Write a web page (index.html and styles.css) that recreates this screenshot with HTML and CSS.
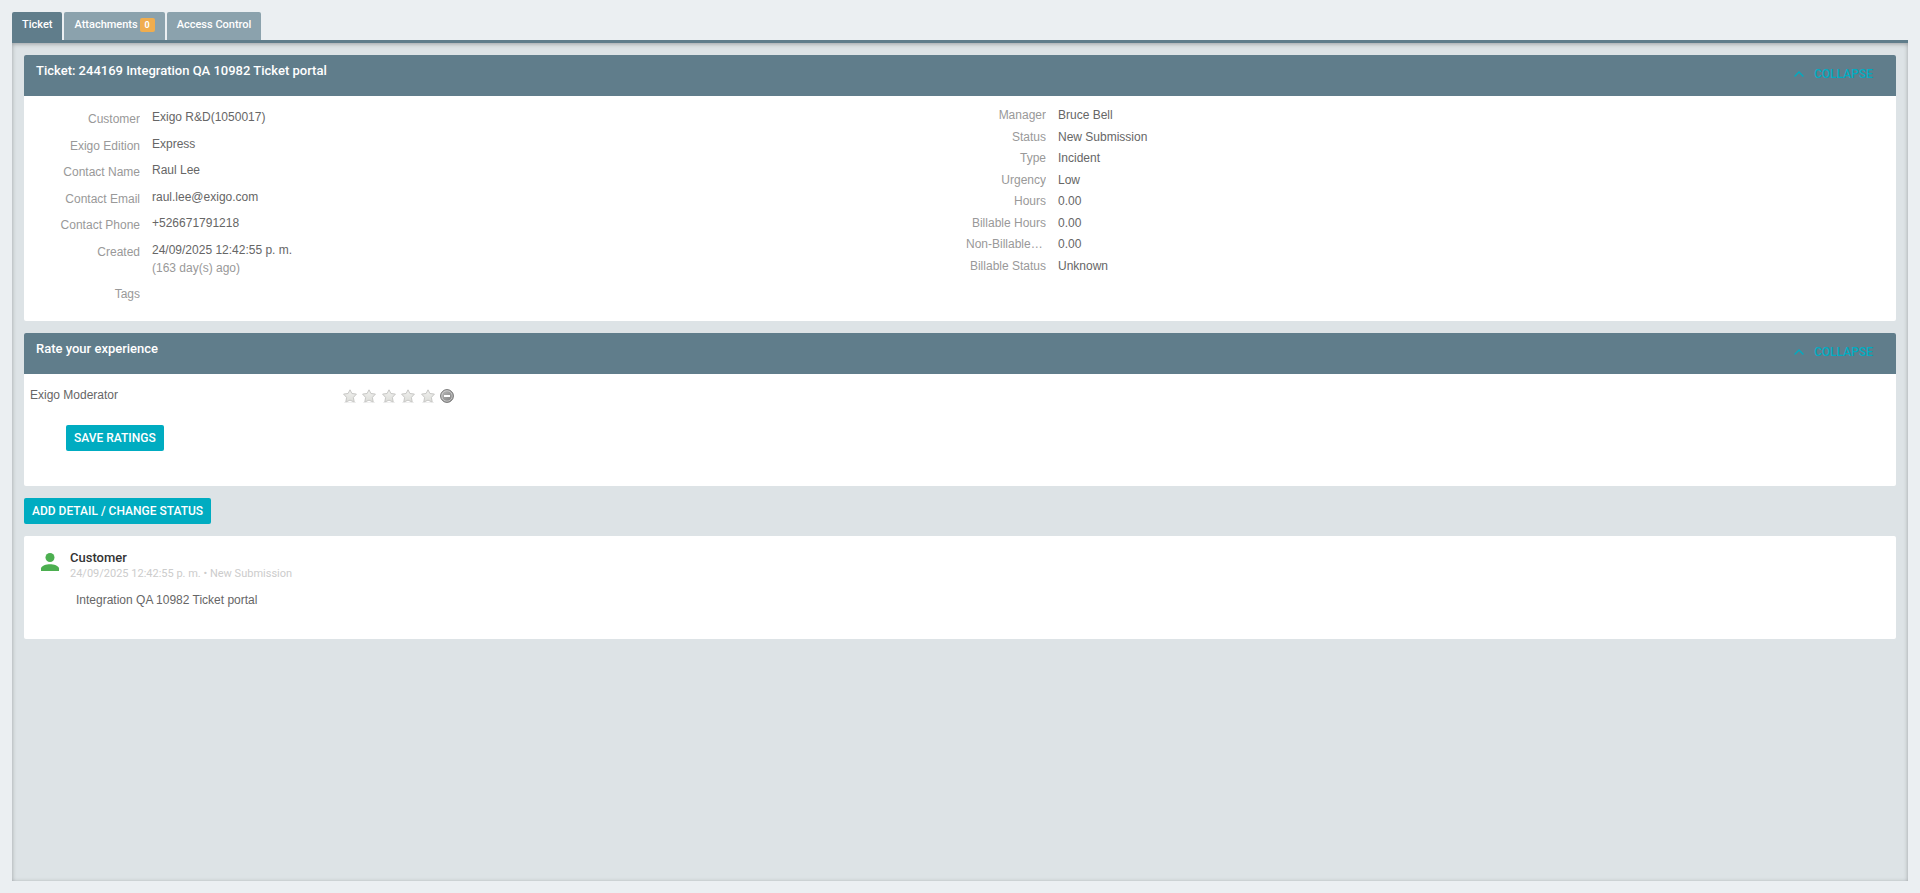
FILE: index.html
```html
<!DOCTYPE html>
<html lang="en">
<head>
    <meta charset="UTF-8">
    <meta name="viewport" content="width=device-width, initial-scale=1.0">
    <title>Ticket 244169</title>
    <link rel="stylesheet" href="styles.css">
</head>
<body>
    <svg class="sprite" aria-hidden="true">
        <defs>
            <linearGradient id="starFill" x1="0" y1="0" x2="0" y2="1">
                <stop offset="0" stop-color="#f2f2f0"/>
                <stop offset="1" stop-color="#dcddd9"/>
            </linearGradient>
            <linearGradient id="cancelFill" x1="0" y1="0" x2="1" y2="1">
                <stop offset="0" stop-color="#bcbcbc"/>
                <stop offset="1" stop-color="#7c7c7c"/>
            </linearGradient>
            <symbol id="star" viewBox="0 0 14 14">
                <path d="M7 .8 8.9 4.5 13.4 5.1 10.4 8.4 11.2 13.1 7 11.1 2.8 13.1 3.6 8.4 .6 5.1 5.1 4.5Z" fill="url(#starFill)" stroke="#c6c6c4" stroke-width="1" stroke-linejoin="round"/>
                <path d="M1 13.6H13" stroke="#e3e3e3" stroke-width=".6"/>
            </symbol>
            <symbol id="chevron" viewBox="0 0 10 6">
                <path d="M.6 5.4 5 1 9.4 5.4" fill="none" stroke="currentColor" stroke-width="1.4"/>
            </symbol>
        </defs>
    </svg>

    <nav class="tabs">
        <a class="tab active" href="#ticket">Ticket</a>
        <a class="tab" href="#attachments">Attachments <span class="badge">0</span></a>
        <a class="tab" href="#access">Access Control</a>
    </nav>

    <main class="tab-content" id="ticket">
        <section class="panel">
            <header class="panel-header">
                <h2>Ticket: 244169 Integration QA 10982 Ticket portal</h2>
                <button class="collapse-btn" type="button">
                    <svg class="chevron"><use href="#chevron"/></svg>
                    COLLAPSE
                </button>
            </header>
            <div class="ticket-body">
                <dl class="details contact">
                    <div class="row"><dt>Customer</dt><dd>Exigo R&amp;D(1050017)</dd></div>
                    <div class="row"><dt>Exigo Edition</dt><dd>Express</dd></div>
                    <div class="row"><dt>Contact Name</dt><dd>Raul Lee</dd></div>
                    <div class="row"><dt>Contact Email</dt><dd>raul.lee@exigo.com</dd></div>
                    <div class="row"><dt>Contact Phone</dt><dd>+526671791218</dd></div>
                    <div class="row"><dt>Created</dt><dd>24/09/2025 12:42:55 p. m.<br><span class="muted">(163 day(s) ago)</span></dd></div>
                    <div class="row"><dt>Tags</dt><dd></dd></div>
                </dl>
                <dl class="details status">
                    <div class="row"><dt>Manager</dt><dd>Bruce Bell</dd></div>
                    <div class="row"><dt>Status</dt><dd>New Submission</dd></div>
                    <div class="row"><dt>Type</dt><dd>Incident</dd></div>
                    <div class="row"><dt>Urgency</dt><dd>Low</dd></div>
                    <div class="row"><dt>Hours</dt><dd>0.00</dd></div>
                    <div class="row"><dt>Billable Hours</dt><dd>0.00</dd></div>
                    <div class="row"><dt>Non-Billable Hours</dt><dd>0.00</dd></div>
                    <div class="row"><dt>Billable Status</dt><dd>Unknown</dd></div>
                </dl>
            </div>
        </section>

        <section class="panel">
            <header class="panel-header">
                <h2>Rate your experience</h2>
                <button class="collapse-btn" type="button">
                    <svg class="chevron"><use href="#chevron"/></svg>
                    COLLAPSE
                </button>
            </header>
            <form class="rating-body">
                <div class="rating-row">
                    <span class="rating-name">Exigo Moderator</span>
                    <div class="stars">
                        <label class="star"><input type="radio" name="rating" value="1" aria-label="1 star"><svg><use href="#star"/></svg></label>
                        <label class="star"><input type="radio" name="rating" value="2" aria-label="2 stars"><svg><use href="#star"/></svg></label>
                        <label class="star"><input type="radio" name="rating" value="3" aria-label="3 stars"><svg><use href="#star"/></svg></label>
                        <label class="star"><input type="radio" name="rating" value="4" aria-label="4 stars"><svg><use href="#star"/></svg></label>
                        <label class="star"><input type="radio" name="rating" value="5" aria-label="5 stars"><svg><use href="#star"/></svg></label>
                        <button class="clear-rating" type="reset" aria-label="Clear rating">
                            <svg viewBox="0 0 14 14">
                                <circle cx="7" cy="7" r="6.4" fill="url(#cancelFill)" stroke="#777" stroke-width="1"/>
                                <circle cx="7" cy="7" r="5.2" fill="none" stroke="#d2d2d2" stroke-width=".8"/>
                                <rect x="4" y="6" width="6" height="2" fill="#fff"/>
                            </svg>
                        </button>
                    </div>
                </div>
                <button class="btn" type="submit">SAVE RATINGS</button>
            </form>
        </section>

        <button class="btn" type="button">ADD DETAIL / CHANGE STATUS</button>

        <article class="panel entry">
            <svg class="avatar" viewBox="0 0 18 18">
                <circle cx="9" cy="4.5" r="4.5" fill="#4caf50"/>
                <path d="M0 18V15.5C0 12.8 5.5 11.3 9 11.3S18 12.8 18 15.5V18Z" fill="#4caf50"/>
            </svg>
            <div class="entry-content">
                <h3>Customer</h3>
                <p class="entry-meta">24/09/2025 12:42:55 p. m. • New Submission</p>
                <p class="entry-text">Integration QA 10982 Ticket portal</p>
            </div>
        </article>
    </main>
</body>
</html>
```
FILE: styles.css
```css
* {
    margin: 0;
    padding: 0;
    box-sizing: border-box;
}

body {
    display: flex;
    flex-direction: column;
    min-height: 100vh;
    padding: 12px;
    background: #ebeff2;
    color: #666;
    font-family: "Liberation Sans", Arial, sans-serif;
    font-size: 12px;
    line-height: 18px;
}

.sprite {
    position: absolute;
    width: 0;
    height: 0;
}

/* Tabs */
.tabs {
    display: flex;
    gap: 2px;
    border-bottom: 3px solid #607d8b;
}

.tab {
    display: flex;
    align-items: center;
    gap: 2px;
    height: 28px;
    padding: 0 10px 2px;
    background: #8ba2ad;
    border-radius: 2px 2px 0 0;
    color: #fff;
    font-family: Roboto, sans-serif;
    font-size: 11px;
    font-weight: 500;
    text-decoration: none;
}

.tab.active {
    background: #607d8b;
}

.badge {
    width: 15px;
    height: 14px;
    background: #f0ad4e;
    border-radius: 2px;
    font-size: 9px;
    font-weight: 700;
    line-height: 14px;
    text-align: center;
}

.tab-content {
    flex: 1;
    display: flex;
    flex-direction: column;
    align-items: flex-start;
    gap: 12px;
    padding: 12px;
    background: #dde3e6;
    box-shadow: inset 0 1px 4px rgba(0, 0, 0, 0.3);
}

/* Panels */
.panel {
    width: 100%;
    background: #fff;
    border-radius: 2px;
    overflow: hidden;
}

.panel-header {
    display: flex;
    justify-content: space-between;
    height: 41px;
    padding: 7px 23px 0 12px;
    background: #607d8b;
    color: #fff;
}

.panel-header h2 {
    font-family: Roboto, sans-serif;
    font-size: 13px;
    font-weight: 500;
    line-height: 18px;
}

.collapse-btn {
    display: flex;
    align-items: center;
    gap: 10px;
    height: 24px;
    background: none;
    border: none;
    color: #00acc1;
    font-family: Roboto, sans-serif;
    font-size: 12px;
    font-weight: 500;
    cursor: pointer;
}

.chevron {
    width: 10px;
    height: 6px;
}

/* Ticket details */
.ticket-body {
    display: grid;
    grid-template-columns: 1fr 1fr;
    padding: 10px 0 18px;
}

.details {
    display: flex;
    flex-direction: column;
    justify-content: space-between;
}

.row {
    display: flex;
    gap: 12px;
}

.row dt {
    width: 80px;
    color: #999;
    text-align: right;
    white-space: nowrap;
    overflow: hidden;
    text-overflow: ellipsis;
}

.contact {
    min-height: 197px;
    padding-left: 36px;
}

.contact dt {
    padding-top: 4px;
}

.contact dd {
    padding-top: 2px;
}

.status {
    padding: 0 0 28px 6px;
}

.muted {
    color: #999;
}

/* Rating */
.rating-body {
    padding: 12px 6px 35px;
}

.rating-row {
    display: flex;
    margin-bottom: 19px;
}

.rating-name {
    width: 313px;
}

.stars {
    display: flex;
    align-items: center;
    justify-content: space-between;
    width: 111px;
    height: 20px;
}

.star {
    position: relative;
    width: 14px;
    height: 14px;
    cursor: pointer;
}

.star input {
    position: absolute;
    inset: 0;
    opacity: 0;
}

.star svg,
.clear-rating svg {
    display: block;
    width: 14px;
    height: 14px;
}

.clear-rating {
    background: none;
    border: none;
    cursor: pointer;
}

.btn {
    height: 26px;
    padding: 0 8px;
    background: #00acc1;
    border: none;
    border-radius: 2px;
    color: #fff;
    font-family: Roboto, sans-serif;
    font-size: 12px;
    font-weight: 500;
    cursor: pointer;
}

.rating-body .btn {
    margin-left: 36px;
}

/* Ticket history */
.entry {
    display: flex;
    gap: 10px;
    padding: 13px 16px 30px;
}

.avatar {
    width: 20px;
    height: 18px;
    margin-top: 4px;
}

.entry h3 {
    color: #333;
    font-family: Roboto, sans-serif;
    font-size: 13px;
    font-weight: 500;
    line-height: 18px;
}

.entry-meta {
    color: #ccc;
    font-family: Roboto, sans-serif;
    font-size: 11px;
    line-height: 14px;
}

.entry-text {
    padding: 10px 6px 0;
}
```
